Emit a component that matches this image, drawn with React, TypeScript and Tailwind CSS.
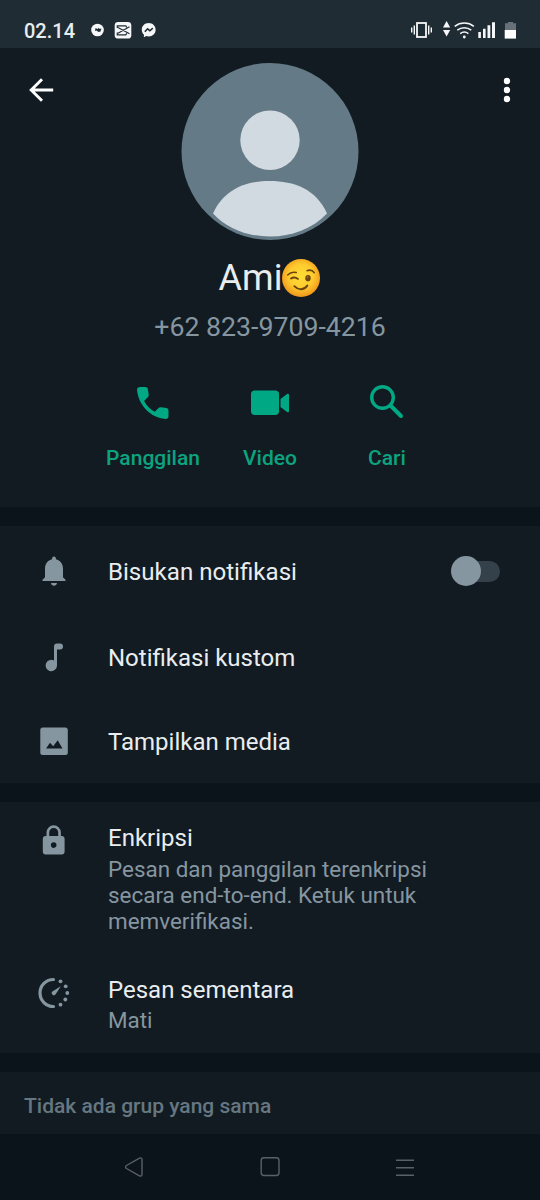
import type { ReactNode } from "react";

function StatusBar() {
  return (
    <header className="flex h-12 items-center bg-[#202c33] pt-3 pl-6 text-[#e9edef]">
      <span className="w-[67px] pt-px text-[20px] leading-6 font-medium">02.14</span>
      <svg width="66" height="20" viewBox="91 20 66 20">
        <circle cx="97.5" cy="30" r="6.3" fill="#f5f7f8" />
        <path d="m95.5 28 2 1 1.5-1.2.5 1.2 2-.6-1 3-2 .6-2-1.4-1.5.4z" fill="#202c33" />
        <rect x="114.7" y="22" width="16.6" height="16.6" rx="3.4" fill="#f5f7f8" />
        <path
          d="M129.5 26.8 118 33.2M129.5 33.8 118 27.4M117.3 28v-2.2h8.5l1 1.6M117.3 32.6v2.2h8.5l1-1.6"
          fill="none"
          stroke="#202c33"
          strokeWidth="1.2"
        />
        <path d="M148.7 23c-4 0-6.9 2.9-6.9 6.7 0 2 .8 3.7 2.1 4.9v2.6l2.4-1.2c.8.3 1.6.4 2.4.4 4 0 6.9-2.9 6.9-6.7s-2.9-6.7-6.9-6.7z" fill="#f5f7f8" />
        <path d="m144.8 31.8 2.8-3 2.3 2 2.9-2.6" fill="none" stroke="#202c33" strokeWidth="1.6" />
      </svg>
      <svg className="ml-auto mr-[22px]" width="108" height="20" viewBox="410 20 108 20">
        <g fill="none" stroke="#f5f7f8">
          <rect x="417" y="23" width="9" height="14" strokeWidth="1.8" />
          <path d="M411.7 27.5v5M414.3 25.5v9M431.3 27.5v5M428.7 25.5v9" strokeWidth="1.4" />
          <path d="M454.7 26.3c5.7-4.4 13.5-4.4 19.2 0M457.3 30.2c4.2-3.3 9.8-3.3 14 0M460.2 33.6c2.6-1.9 5.6-1.9 8.2 0" strokeWidth="1.5" />
        </g>
        <g fill="#f5f7f8">
          <path d="m446.6 21 3.6 6.4H443zM446.6 36.5l3.6-6.4H443z" />
          <circle cx="464.3" cy="37" r="1.4" />
          <path d="M478.3 32h2.6v6h-2.6zM483 28.7h2.6V38H483zM487.5 25.3h2.8V38h-2.8zM492 22.3h3V38h-3z" />
        </g>
        <path d="M505 23.3h3V22h5v1.3h3V30h-11z" fill="#687177" />
        <path d="M504.7 30H516v8.6h-11.3z" fill="#fff" />
      </svg>
    </header>
  );
}

function Avatar() {
  return (
    <svg width="178" height="178" viewBox="0 0 178 178">
      <circle cx="89" cy="88.5" r="88.5" fill="#647a86" />
      <circle cx="89" cy="77.2" r="29.7" fill="#d1d9e1" />
      <path d="M32 150.5C43 126 65 118 89 118s46 8 57 32.5C131 166 111 173.5 89 173.5S46 166 32 150.5z" fill="#d1d9e1" />
    </svg>
  );
}

function WinkEmoji() {
  return (
    <svg className="-ml-px" width="40" height="40" viewBox="0 0 40 40" role="img" aria-label="😉">
      <defs>
        <radialGradient id="wink" cx="50%" cy="45%" r="53%">
          <stop offset="0" stopColor="#ffdc35" />
          <stop offset="0.6" stopColor="#fdcb2e" />
          <stop offset="1" stopColor="#f39a1d" />
        </radialGradient>
      </defs>
      <circle cx="20" cy="20" r="19" fill="url(#wink)" />
      <g fill="none" stroke="#6b4412" strokeLinecap="round">
        <path d="M6.7 17c2.2-2.5 5-3.3 8.6-2.5M26 12.7c3-1.2 5.5-.5 7.3 2" strokeWidth="1.5" />
        <path d="M10 20.6c2.2-1.5 4.5-1.5 7 .3" strokeWidth="1.8" />
        <path d="M13.3 28.2c4 4.2 9.7 4 13-.6" strokeWidth="1.9" />
      </g>
      <ellipse cx="27" cy="20.2" rx="2.7" ry="3.1" fill="#6b4412" />
      <circle cx="26.5" cy="19.2" r=".8" fill="#b58232" />
    </svg>
  );
}

interface ActionProps {
  label: string;
  children: ReactNode;
}

function Action({ label, children }: ActionProps) {
  return (
    <button className="flex w-[117px] flex-col items-center text-[#0ca47f]">
      <svg width="44" height="44" viewBox="0 0 44 44" fill="#00a884">
        {children}
      </svg>
      <span className="mt-[21px] text-[21px] leading-6 font-medium">{label}</span>
    </button>
  );
}

function Profile() {
  return (
    <section className="flex h-[459px] items-start bg-[#121b22] px-6 pt-[15px]">
      <svg className="mt-[11px]" width="32" height="32" viewBox="24 74 32 32">
        <path d="M53.2 90H31.5M42 79.2 31.2 90 42 100.8" fill="none" stroke="#fff" strokeWidth="2.9" />
      </svg>
      <div className="flex flex-1 flex-col items-center">
        <Avatar />
        <h1 className="mt-[15px] flex h-11 items-center text-[36px] leading-[44px] text-[#e9edef]">
          Ami
          <WinkEmoji />
        </h1>
        <p className="mt-[11px] text-[26.7px] leading-8 text-[#8696a0]">+62 823-9709-4216</p>
        <div className="mt-[38px] flex">
          <Action label="Panggilan">
            <path d="M9 6h5.2c1.5 0 2.5.9 2.7 2.3l.8 5.4c.1 1-.2 1.9-.9 2.6l-3.7 3.7c2.7 5 6 8.3 10.7 10.7l3.7-3.7c.7-.7 1.6-1 2.6-.8l5.2.9c1.4.3 2.2 1.3 2.2 2.6v5.5c0 1.7-1.3 2.9-3 2.8C19 36.5 7.5 24 6 9 5.9 7.3 7.2 6 9 6z" />
          </Action>
          <Action label="Video">
            <path d="M6.5 9.5h21c2 0 3.5 1.5 3.5 3.5v17.5c0 2-1.5 3.5-3.5 3.5h-21c-2 0-3.5-1.5-3.5-3.5V13c0-2 1.5-3.5 3.5-3.5zM32.5 18l6.5-5c1-.8 2-.2 2 1v16c0 1.2-1 1.8-2 1l-6.5-5z" />
          </Action>
          <Action label="Cari">
            <circle cx="17.5" cy="16.5" r="10.8" fill="none" stroke="#00a884" strokeWidth="3.4" />
            <path d="m25.5 24.500 10.500 10.500" stroke="#00a884" strokeWidth="4" strokeLinecap="round" />
          </Action>
        </div>
      </div>
      <svg className="mt-[11px]" width="32" height="32" viewBox="484 74 32 32" fill="#fff">
        <circle cx="507" cy="81" r="3.2" />
        <circle cx="507" cy="90" r="3.2" />
        <circle cx="507" cy="99" r="3.2" />
      </svg>
    </section>
  );
}

function RowIcon({ children }: { children: ReactNode }) {
  return (
    <svg className="mr-[34px] shrink-0" width="40" height="40" viewBox="0 0 40 40" fill="#8696a0">
      {children}
    </svg>
  );
}

function Settings() {
  return (
    <section className="mt-[19px] flex h-[257px] flex-col bg-[#121b22] pr-10 pl-[34px] text-[24px] text-[#e9edef]">
      <div className="flex h-[90px] items-center">
        <RowIcon>
          <path d="M18.1 7.5a1.9 1.9 0 0 1 3.8 0v.8c4.2 1 7.1 4.5 7.1 9.2v8.7l2.5 2.5v1.3h-23v-1.3l2.500-2.500v-8.700c0-4.700 2.900-8.200 7.100-9.200zM17 32h6c-.3 1.700-1.500 2.800-3 2.800s-2.700-1.100-3-2.800z" />
        </RowIcon>
        <span className="pt-0.5 text-[24.1px]">Bisukan notifikasi</span>
        <span className="ml-auto flex h-[30px] w-[49.5px] items-center">
          <span className="z-10 size-[30px] shrink-0 rounded-full bg-[#8696a0]" />
          <span className="-ml-4 h-[21px] w-[35px] shrink-0 rounded-r-full bg-[#35414a]" />
        </span>
      </div>
      <div className="flex h-[84px] items-center">
        <RowIcon>
          <path d="M23 5.5h3a3 3 0 0 1 0 6h-3v16a5.7 5.7 0 1 1-3-5V8.5a3 3 0 0 1 3-3z" />
        </RowIcon>
        <span>Notifikasi kustom</span>
      </div>
      <div className="flex h-[83px] items-center">
        <RowIcon>
          <rect x="6.3" y="5.5" width="27.5" height="27.5" rx="2.5" />
          <path d="m12 26.5 4-5.7 3.2 3.5 4.5-6 4.8 8.2z" fill="#121b22" />
        </RowIcon>
        <span>Tampilkan media</span>
      </div>
    </section>
  );
}

function Privacy() {
  return (
    <section className="mt-[19px] h-[251px] bg-[#121b22] pl-[34px]">
      <div className="flex h-[152px] pt-5">
        <RowIcon>
          <path
            fillRule="evenodd"
            d="M11.5 14h1v-3.5a7.2 7.2 0 0 1 14.4 0V14h1c1.6 0 2.7 1.2 2.7 2.7v13c0 1.5-1.1 2.7-2.7 2.7H11.5c-1.6 0-2.7-1.2-2.7-2.7v-13c0-1.500 1.100-2.700 2.700-2.700zM15.200 14h9v-3.500a4.500 4.500 0 0 0-9 0zM19.700 20.300a2.800 2.800 0 1 0 0 5.600 2.800 2.800 0 0 0 0-5.600z"
          />
        </RowIcon>
        <div>
          <h2 className="text-[24px] leading-8 text-[#e9edef]">Enkripsi</h2>
          <p className="w-[340px] pt-0.5 text-[22.45px] leading-[26.2px] text-[#8696a0]">
            Pesan dan panggilan terenkripsi secara end-to-end. Ketuk untuk memverifikasi.
          </p>
        </div>
      </div>
      <div className="flex pt-5">
        <RowIcon>
          <path d="M19.5 5.5a13.5 13.5 0 0 0 0 27" fill="none" stroke="#8696a0" strokeWidth="3.2" strokeLinecap="round" />
          <path d="m26.8 12.3-5.3 8.3a2.2 2.2 0 1 1-3.2-3.2z" />
          <circle cx="26.5" cy="7.3" r="1.9" />
          <circle cx="31.7" cy="12.3" r="1.9" />
          <circle cx="33.3" cy="19" r="1.9" />
          <circle cx="31.3" cy="25.5" r="1.9" />
          <circle cx="26.5" cy="30.7" r="1.9" />
        </RowIcon>
        <div>
          <h2 className="text-[24px] leading-8 text-[#e9edef]">Pesan sementara</h2>
          <p className="pt-px text-[22.4px] leading-[26.2px] text-[#8696a0]">Mati</p>
        </div>
      </div>
    </section>
  );
}

function NavBar() {
  return (
    <nav className="flex h-[66px] items-center justify-center gap-[108px] pr-px">
      <svg width="28" height="28" viewBox="119.5 1153 28 28" fill="none" stroke="#596066" strokeWidth="1.4">
        <path d="M139 1158.2c1.3-.8 2.5-.1 2.5 1.3v15c0 1.4-1.2 2.1-2.5 1.3l-13-7.3c-1.3-.8-1.3-2.2 0-3z" />
      </svg>
      <svg width="28" height="28" viewBox="255.5 1153 28 28" fill="none" stroke="#596066" strokeWidth="1.4">
        <rect x="260.7" y="1157.7" width="17.8" height="17.8" rx="2.7" />
      </svg>
      <svg width="28" height="28" viewBox="392 1153 28 28" fill="none" stroke="#596066" strokeWidth="1.4">
        <path d="M396 1160.2h18M396 1167.7h18M396 1175.2h18" />
      </svg>
    </nav>
  );
}

export default function App() {
  return (
    <main className="h-[1200px] w-[540px] overflow-hidden bg-[#0b141a] font-['Roboto',sans-serif]">
      <StatusBar />
      <Profile />
      <Settings />
      <Privacy />
      <section className="mt-[19px] flex h-[62px] items-center bg-[#121b22] px-6 pt-2 text-[21px] font-medium text-[#667781]">
        Tidak ada grup yang sama
      </section>
      <NavBar />
    </main>
  );
}
